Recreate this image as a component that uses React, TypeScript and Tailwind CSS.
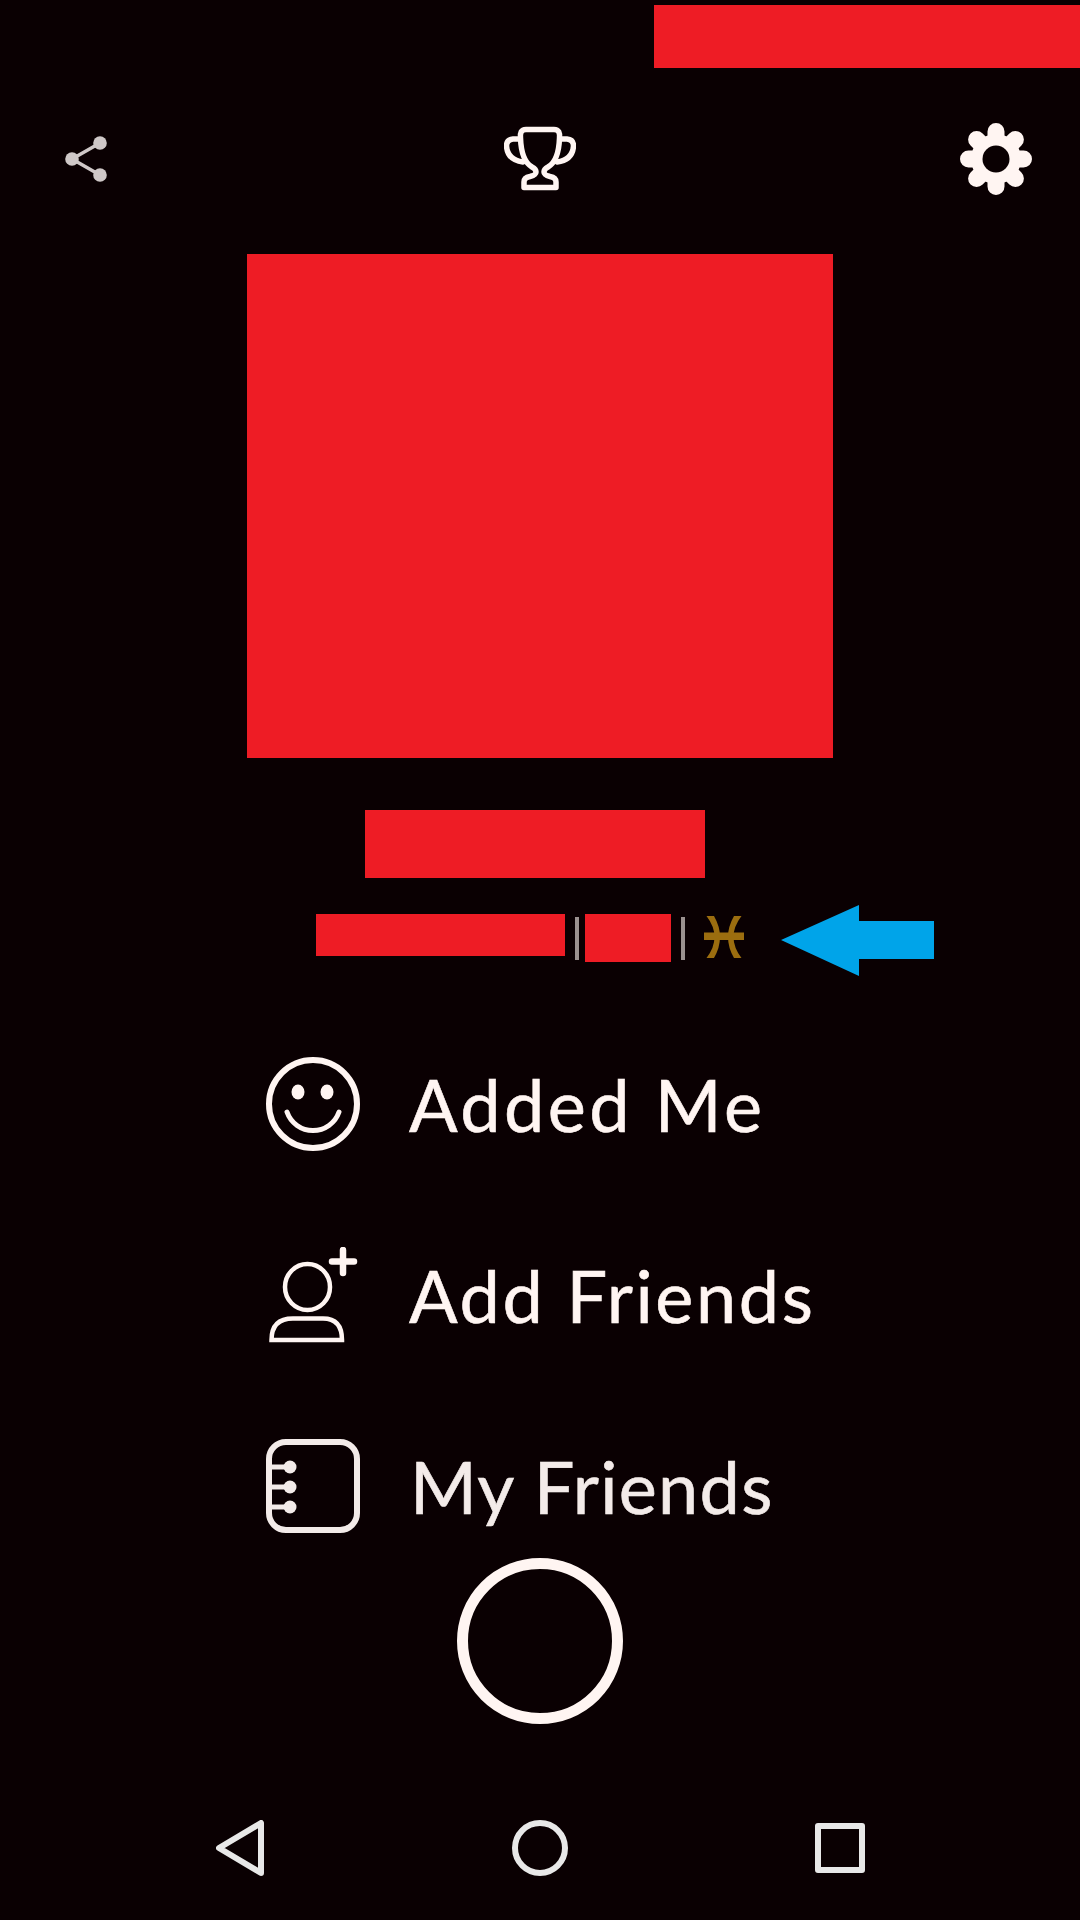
const menuText = "text-[72px] leading-[94px] font-normal text-[#fff5f2] whitespace-nowrap [-webkit-text-stroke:0.6px_#fff5f2]";

function ShareIcon() {
  return (
    <svg width="44" height="72" viewBox="0 0 44 72" className="ml-[64px] shrink-0">
      <path d="M8 36 L36 20 M8 36 L36 52" stroke="#cfc8c8" strokeWidth="3.5" fill="none" />
      <circle cx="36" cy="20" r="6.8" fill="#cfc8c8" />
      <circle cx="8" cy="36" r="6.8" fill="#cfc8c8" />
      <circle cx="36" cy="52" r="6.8" fill="#cfc8c8" />
    </svg>
  );
}

function TrophyIcon() {
  return (
    <svg width="72" height="72" viewBox="14 13 72 72" className="ml-[396px] shrink-0">
      <g stroke="#fff5f2" strokeWidth="5.5" fill="none" strokeLinejoin="round" strokeLinecap="round">
        <path d="M36 19.5 C31 19.5 30 23 30.5 28 C31 42 35 53 42 57 Q46 59 46 62 Q46 65 40 66.5 Q34 67.5 34 72 V77.5 H66 V72 Q66 67.5 60 66.5 Q54 65 54 62 Q54 59 58 57 C65 53 69 42 69.5 28 C70 23 69 19.5 64 19.5 Z" />
        <path d="M29 29 H23 Q16.5 29.5 16.5 36 Q17.5 50 33 52" />
        <path d="M71 29 H77 Q83.5 29.5 83.5 36 Q82.5 50 67 52" />
      </g>
    </svg>
  );
}

function GearIcon() {
  return (
    <svg width="72" height="72" viewBox="0 0 72 72" className="ml-[384px] shrink-0">
      <g stroke="#fff5f2" strokeWidth="17" strokeLinecap="round">
        <path d="M36 36 V8.5 M36 36 V63.5 M36 36 H8.5 M36 36 H63.5" />
        <path d="M36 36 L16.6 16.6 M36 36 L55.4 16.6 M36 36 L16.6 55.4 M36 36 L55.4 55.4" />
      </g>
      <circle cx="36" cy="36" r="25" fill="#fff5f2" />
      <circle cx="36" cy="36" r="13.5" fill="#0a0002" />
    </svg>
  );
}

function PiscesIcon() {
  return (
    <svg width="40" height="42" viewBox="0 0 40 42" className="ml-[19px] mt-[11px] shrink-0">
      <g fill="#9b6d0f">
        <path d="M2.5 0 H10 Q22 21 10 42 H2.5 Q18.5 21 2.5 0 Z" />
        <path d="M37.5 0 H30 Q18 21 30 42 H37.5 Q21.5 21 37.5 0 Z" />
        <rect x="0" y="16.5" width="40" height="7.5" />
      </g>
    </svg>
  );
}

function ArrowIcon() {
  return (
    <svg width="153" height="71" viewBox="0 0 153 71" className="ml-[37px] shrink-0">
      <path d="M0 35 L78 0 V16 H153 V54 H78 V71 Z" fill="#00a4e9" />
    </svg>
  );
}

function SmileIcon() {
  return (
    <svg width="94" height="94" viewBox="0 0 94 94" className="shrink-0">
      <circle cx="47" cy="47" r="44" stroke="#fff5f2" strokeWidth="6" fill="none" />
      <ellipse cx="32" cy="35" rx="6.5" ry="7.5" fill="#fff5f2" />
      <ellipse cx="61" cy="35" rx="6.5" ry="7.5" fill="#fff5f2" />
      <path d="M21 55 A27.5 27.5 0 0 0 73 55" stroke="#fff5f2" strokeWidth="5" fill="none" strokeLinecap="round" />
    </svg>
  );
}

function AddFriendIcon() {
  return (
    <svg width="94" height="96" viewBox="0 0 94 96" className="shrink-0">
      <g stroke="#fff5f2" fill="none">
        <ellipse cx="41.5" cy="40" rx="22.5" ry="23" strokeWidth="4.5" />
        <path d="M5.5 93 Q5.5 71.5 27 71.5 H57 Q76 71.5 76 93 Z" strokeWidth="4.5" />
        <path d="M77 3 V26 M66 14.5 H88" strokeWidth="6.5" strokeLinecap="round" />
      </g>
    </svg>
  );
}

function NotebookIcon() {
  return (
    <svg width="94" height="94" viewBox="0 0 94 94" className="shrink-0">
      <rect x="3" y="3" width="88" height="88" rx="17" stroke="#f3ebe9" strokeWidth="6" fill="none" />
      <path d="M3 28 H24 M3 48 H24 M3 68 H24" stroke="#f3ebe9" strokeWidth="5" />
      <circle cx="24" cy="28" r="6.5" fill="#f3ebe9" />
      <circle cx="24" cy="48" r="6.5" fill="#f3ebe9" />
      <circle cx="24" cy="68" r="6.5" fill="#f3ebe9" />
    </svg>
  );
}

export default function App() {
  return (
    <div className="w-[1080px] h-[1920px] overflow-hidden bg-[#0a0002] pt-[5px] font-['Lato',sans-serif]">
      {/* top redacted block */}
      <div className="ml-auto w-[426px] h-[63px] bg-[#ee1c25]" />

      {/* share, trophy, settings */}
      <div className="flex mt-[55px] h-[72px]">
        <ShareIcon />
        <TrophyIcon />
        <GearIcon />
      </div>

      {/* profile picture */}
      <div className="mx-auto mt-[59px] w-[586px] h-[504px] bg-[#ee1c25]" />

      {/* name */}
      <div className="ml-[365px] mt-[52px] w-[340px] h-[68px] bg-[#ee1c25]" />

      {/* info line */}
      <div className="flex items-start mt-[27px] h-[71px] pl-[316px]">
        <div className="mt-[9px] w-[249px] h-[42px] bg-[#ee1c25]" />
        <div className="ml-[10px] mt-[12px] w-[4px] h-[43px] bg-[#9a918f]" />
        <div className="ml-[6px] mt-[9px] w-[86px] h-[48px] bg-[#ee1c25]" />
        <div className="ml-[10px] mt-[12px] w-[4px] h-[43px] bg-[#9a918f]" />
        <PiscesIcon />
        <ArrowIcon />
      </div>

      {/* menu */}
      <div className="flex flex-col gap-[97px] mt-[81px] pl-[266px]">
        <div className="flex items-center gap-[49px] h-[94px]">
          <SmileIcon />
          <span className={`${menuText} tracking-[3.4px]`}>Added Me</span>
        </div>
        <div className="flex items-center gap-[49px] h-[94px]">
          <AddFriendIcon />
          <span className={`${menuText} tracking-[2.6px]`}>Add Friends</span>
        </div>
        <div className="flex items-center gap-[50px] h-[94px]">
          <NotebookIcon />
          <span className="text-[72px] leading-[94px] font-normal tracking-[1.3px] text-[#f3ebe9] whitespace-nowrap [-webkit-text-stroke:0.6px_#f3ebe9]">My Friends</span>
        </div>
      </div>

      {/* capture button */}
      <div className="mx-auto mt-[25px] w-[166px] h-[166px] rounded-full border-[11px] border-[#fff5f2]" />

      {/* android nav bar */}
      <div className="flex items-center mt-[95px] h-[58px] pl-[216px]">
        <svg width="48" height="56" viewBox="0 0 48 56" className="shrink-0">
          <path d="M45 3 V53 L3 28 Z" stroke="#e8e8e8" strokeWidth="6" strokeLinejoin="round" fill="none" />
        </svg>
        <div className="ml-[248px] w-[56px] h-[56px] rounded-full border-[6px] border-[#e8e8e8]" />
        <div className="ml-[247px] w-[50px] h-[50px] rounded-[3px] border-[6px] border-[#e8e8e8]" />
      </div>
    </div>
  );
}
